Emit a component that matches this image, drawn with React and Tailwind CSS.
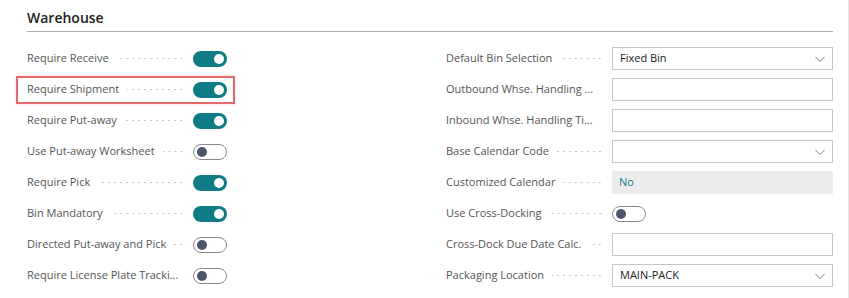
import React from 'react'

const leftFields = [
  { label: 'Require Receive', on: true },
  { label: 'Require Shipment', on: true, highlight: true },
  { label: 'Require Put-away', on: true },
  { label: 'Use Put-away Worksheet', on: false },
  { label: 'Require Pick', on: true },
  { label: 'Bin Mandatory', on: true },
  { label: 'Directed Put-away and Pick', on: false },
  { label: 'Require License Plate Tracki...', on: false },
]

const rightFields = [
  { label: 'Default Bin Selection', type: 'select', value: 'Fixed Bin' },
  { label: 'Outbound Whse. Handling ...', type: 'input' },
  { label: 'Inbound Whse. Handling Ti...', type: 'input' },
  { label: 'Base Calendar Code', type: 'select', value: '' },
  { label: 'Customized Calendar', type: 'readonly', value: 'No' },
  { label: 'Use Cross-Docking', type: 'toggle', on: false },
  { label: 'Cross-Dock Due Date Calc.', type: 'input' },
  { label: 'Packaging Location', type: 'select', value: 'MAIN-PACK' },
]

function Toggle({ on }) {
  if (on) {
    return (
      <div className="flex h-[16px] w-[34px] items-center justify-end rounded-full bg-[#0f7c85] pr-[3px]">
        <div className="h-[10px] w-[10px] rounded-full bg-white" />
      </div>
    )
  }
  return (
    <div className="flex h-[16px] w-[34px] items-center rounded-full border border-[#8a8a8a] bg-white pl-[3px]">
      <div className="h-[10px] w-[10px] rounded-full bg-[#4d566a]" />
    </div>
  )
}

function Label({ text }) {
  return (
    <div className="flex w-[166px] shrink-0 items-center pr-[9px]">
      <span className="whitespace-nowrap text-[#555555]">{text}</span>
      <div className="ml-[8px] h-[3px] flex-1 bg-[radial-gradient(circle,#c4c4c4_0.7px,transparent_1px)] bg-[length:6px_3px] bg-right" />
    </div>
  )
}

function Chevron() {
  return (
    <svg width="12" height="12" viewBox="0 0 12 12" fill="none">
      <path d="M1.5 4 L6 8.5 L10.5 4" stroke="#7a7a7a" strokeWidth="1" />
    </svg>
  )
}

function Control({ field }) {
  if (field.type === 'toggle') return <Toggle on={field.on} />
  if (field.type === 'readonly') {
    return (
      <div className="flex h-[23px] w-[221px] items-center bg-[#ececec] px-[7px] text-[#0f7c85]">
        {field.value}
      </div>
    )
  }
  return (
    <div className="flex h-[23px] w-[221px] items-center justify-between border border-[#c6c6c6] bg-white pl-[7px] pr-[6px] text-[#212121]">
      <span>{field.value}</span>
      {field.type === 'select' && <Chevron />}
    </div>
  )
}

export default function App() {
  return (
    <div
      className="h-[298px] w-[849px] overflow-hidden border-r border-[#e6e6e6] bg-white pl-[27px] pr-[15px] pt-[8px] text-[11px]"
      style={{ fontFamily: '"Open Sans", "Noto Sans", sans-serif' }}
    >
      <div className="h-[24px] border-b border-[#a9b0bc] text-[14px] font-semibold leading-[20px] text-[#212121]">
        Warehouse
      </div>
      <div className="mt-[11px] grid grid-cols-2 gap-x-[32px]">
        <div className="flex flex-col">
          {leftFields.map((f) => (
            <div key={f.label} className="relative flex h-[31px] items-center">
              {f.highlight && (
                <span className="absolute -left-[11px] top-[2px] h-[28px] w-[219px] border-2 border-[#e36a6a] shadow-[0_0_3px_rgba(227,106,106,0.35)]" />
              )}
              <Label text={f.label} />
              <Toggle on={f.on} />
            </div>
          ))}
        </div>
        <div className="flex flex-col">
          {rightFields.map((f) => (
            <div key={f.label} className="flex h-[31px] items-center">
              <Label text={f.label} />
              <Control field={f} />
            </div>
          ))}
        </div>
      </div>
    </div>
  )
}
